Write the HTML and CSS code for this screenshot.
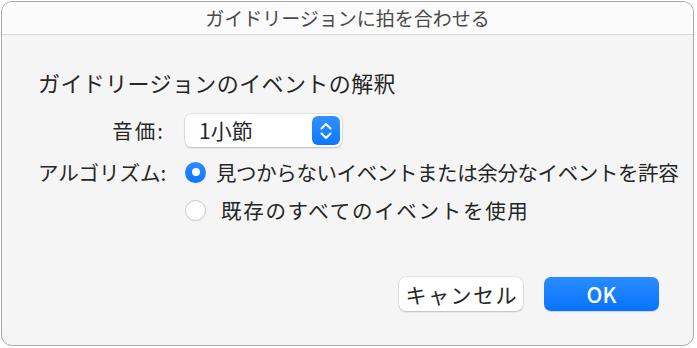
FILE: index.html
```html
<!DOCTYPE html>
<html lang="ja">
<head>
<meta charset="utf-8">
<title>ガイドリージョンに拍を合わせる</title>
<link rel="stylesheet" href="styles.css">
</head>
<body>
<div class="window">
  <div class="titlebar">ガイドリージョンに拍を合わせる</div>
  <div class="content">
    <h1 class="heading">ガイドリージョンのイベントの解釈</h1>
    <div class="form">
      <div class="label label-popup">音価:</div>
      <div class="popup">
        <span class="popup-text">1小節</span>
        <span class="stepper">
          <svg width="14" height="20" viewBox="0 0 14 20" aria-hidden="true">
            <path d="M2.5 7.5 L7 3 L11.5 7.5" fill="none" stroke="#fff" stroke-width="2" stroke-linecap="round" stroke-linejoin="round"/>
            <path d="M2.5 12.5 L7 17 L11.5 12.5" fill="none" stroke="#fff" stroke-width="2" stroke-linecap="round" stroke-linejoin="round"/>
          </svg>
        </span>
      </div>
      <div class="label label-radio">アルゴリズム:</div>
      <div class="radios">
        <div class="radio-row">
          <span class="radio radio-on"></span>
          <span class="radio-text radio-text-tight">見つからないイベントまたは余分なイベントを許容</span>
        </div>
        <div class="radio-row">
          <span class="radio"></span>
          <span class="radio-text radio-text-wide">既存のすべてのイベントを使用</span>
        </div>
      </div>
    </div>
    <div class="buttons">
      <button class="btn btn-cancel">キャンセル</button>
      <button class="btn btn-ok">OK</button>
    </div>
  </div>
</div>
</body>
</html>
```

FILE: styles.css
```css
html, body {
  margin: 0;
  padding: 0;
  background: #ffffff;
}

body {
  font-family: "Noto Sans CJK JP", "Noto Sans", sans-serif;
  color: #262626;
}

.window {
  box-sizing: border-box;
  margin: 1px 0 0 1px;
  width: 693px;
  height: 345px;
  border: 1px solid #a9a9a9;
  border-radius: 11px;
  overflow: hidden;
  background: #f5f5f5;
  display: flex;
  flex-direction: column;
}

.titlebar {
  height: 32px;
  flex: none;
  background: #fbfbfb;
  border-bottom: 1px solid #dcdcdc;
  text-align: center;
  font-size: 19px;
  line-height: 32px;
  color: #4a4a4a;
}

.content {
  flex: 1;
  padding: 32px 34px 0 36px;
  display: flex;
  flex-direction: column;
}

.heading {
  margin: 0;
  font-size: 22px;
  font-weight: 400;
  line-height: 30px;
  letter-spacing: 0.4px;
  color: #262626;
}

.form {
  margin-top: 17px;
  display: grid;
  grid-template-columns: 127px auto;
  column-gap: 20px;
  row-gap: 10px;
  align-items: start;
}

.label {
  font-size: 20.5px;
  text-align: right;
  white-space: nowrap;
  color: #262626;
}

.label-popup {
  line-height: 33px;
  letter-spacing: 2px;
}

.label-radio {
  line-height: 30px;
}

.popup {
  box-sizing: border-box;
  width: 157px;
  height: 33px;
  background: #ffffff;
  border-radius: 6px;
  box-shadow: 0 0 0 0.5px rgba(0, 0, 0, 0.12), 0 1px 2px rgba(0, 0, 0, 0.18);
  display: flex;
  align-items: center;
  justify-content: space-between;
  padding: 0 2px 0 14px;
}

.popup-text {
  font-size: 21px;
  line-height: 33px;
}

.stepper {
  width: 28px;
  height: 29px;
  border-radius: 6px;
  background: linear-gradient(#3391ff, #0a78ff);
  display: flex;
  align-items: center;
  justify-content: center;
}

.radios {
  display: flex;
  flex-direction: column;
  gap: 8px;
}

.radio-row {
  display: flex;
  align-items: center;
  height: 30px;
  gap: 10px;
}

.radio {
  box-sizing: border-box;
  width: 21px;
  height: 21px;
  border-radius: 50%;
  background: #ffffff;
  border: 1px solid #cdcdcd;
  box-shadow: 0 0.5px 1px rgba(0, 0, 0, 0.08);
  flex: none;
  position: relative;
}

.radio-on {
  border: none;
  background: linear-gradient(#2d8cff, #0a78ff);
}

.radio-on::after {
  content: "";
  position: absolute;
  left: 6.5px;
  top: 6.5px;
  width: 8px;
  height: 8px;
  border-radius: 50%;
  background: #ffffff;
}

.radio-text {
  font-size: 20.5px;
  line-height: 30px;
  white-space: nowrap;
}

.radio-text-tight {
  letter-spacing: -0.4px;
}

.radio-text-wide {
  margin-left: 5px;
  letter-spacing: 1.7px;
}

.buttons {
  margin-top: 52px;
  display: flex;
  justify-content: flex-end;
  gap: 21px;
}

.btn {
  box-sizing: border-box;
  height: 34px;
  border: none;
  border-radius: 7px;
  font-family: "Noto Sans CJK JP", "Noto Sans", sans-serif;
  font-size: 21px;
  line-height: 34px;
  padding: 0;
  cursor: default;
}

.btn-cancel {
  width: 124px;
  background: #ffffff;
  color: #262626;
  letter-spacing: 1.5px;
  text-indent: 1.5px;
  box-shadow: 0 0 0 0.5px rgba(0, 0, 0, 0.12), 0 1px 2px rgba(0, 0, 0, 0.18);
}

.btn-ok {
  width: 115px;
  background: linear-gradient(#2b8cff, #0673ff);
  color: #ffffff;
  font-weight: 500;
  box-shadow: 0 0.5px 1px rgba(0, 0, 0, 0.15);
}
```
